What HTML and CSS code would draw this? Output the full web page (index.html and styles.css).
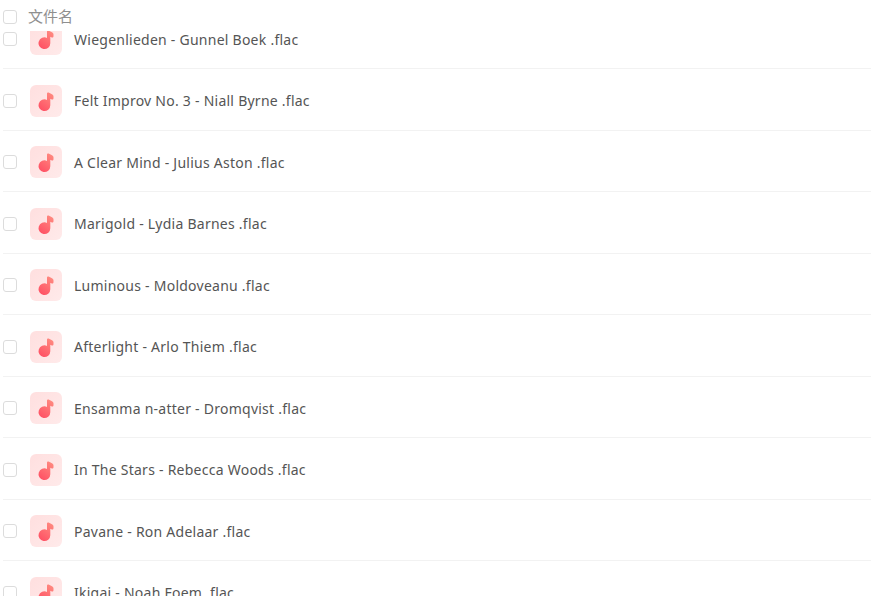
FILE: index.html
```html
<!DOCTYPE html>
<html lang="zh">
<head>
<meta charset="utf-8">
<title>文件名</title>
<link rel="stylesheet" href="styles.css">
</head>
<body>
<svg class="sprite" width="0" height="0" aria-hidden="true">
  <defs>
    <linearGradient id="tile" x1="0" y1="0" x2="1" y2="1">
      <stop offset="0" stop-color="#ffdfdf"/>
      <stop offset="1" stop-color="#ffeaea"/>
    </linearGradient>
    <linearGradient id="ink" x1="0.8" y1="0" x2="0.2" y2="1">
      <stop offset="0" stop-color="#ff8a80"/>
      <stop offset="1" stop-color="#ff5064"/>
    </linearGradient>
  </defs>
  <symbol id="note" viewBox="0 0 32 32">
    <rect width="32" height="32" rx="6" fill="url(#tile)"/>
    <path d="M17 8.7c0-.9.8-1.4 1.600-1.100l3.400 1.600c.9.400 1.500 1.300 1.500 2.300v1.800c0 .9-.9 1.500-1.700 1.100l-1.500-.7v6.500a5.900 5.900 0 1 1-3.300-5.300z" fill="url(#ink)"/>
  </symbol>
</svg>
<main class="table">
  <header class="head">
    <span class="check"></span>
    <span class="head-label">文件名</span>
  </header>
  <div class="viewport">
    <ul class="rows">
      <li class="row"><span class="check"></span><svg class="icon"><use href="#note"/></svg><span class="name">Wiegenlieden - Gunnel Boek .flac</span></li>
      <li class="row"><span class="check"></span><svg class="icon"><use href="#note"/></svg><span class="name">Felt Improv No. 3 - Niall Byrne .flac</span></li>
      <li class="row"><span class="check"></span><svg class="icon"><use href="#note"/></svg><span class="name">A Clear Mind - Julius Aston .flac</span></li>
      <li class="row"><span class="check"></span><svg class="icon"><use href="#note"/></svg><span class="name">Marigold - Lydia Barnes .flac</span></li>
      <li class="row"><span class="check"></span><svg class="icon"><use href="#note"/></svg><span class="name">Luminous - Moldoveanu .flac</span></li>
      <li class="row"><span class="check"></span><svg class="icon"><use href="#note"/></svg><span class="name">Afterlight - Arlo Thiem .flac</span></li>
      <li class="row"><span class="check"></span><svg class="icon"><use href="#note"/></svg><span class="name">Ensamma n-atter - Dromqvist .flac</span></li>
      <li class="row"><span class="check"></span><svg class="icon"><use href="#note"/></svg><span class="name">In The Stars - Rebecca Woods .flac</span></li>
      <li class="row"><span class="check"></span><svg class="icon"><use href="#note"/></svg><span class="name">Pavane - Ron Adelaar .flac</span></li>
      <li class="row"><span class="check"></span><svg class="icon"><use href="#note"/></svg><span class="name">Ikigai - Noah Foem .flac</span></li>
    </ul>
  </div>
</main>
</body>
</html>
```
FILE: styles.css
```css
* { box-sizing: border-box; }
html, body { margin: 0; height: 100%; background: #fff; overflow: hidden; }
body { font-family: "Noto Sans", "Noto Sans CJK SC", sans-serif; font-size: 14px; color: #555; }
.sprite { position: absolute; }
.table { padding-left: 3px; }
.head { display: flex; align-items: center; gap: 11px; height: 31px; padding-top: 2px; }
.head-label { color: #8f8f8f; font-size: 15px; padding-bottom: 2px; }
.check { flex: none; width: 14px; height: 14px; border: 1px solid #dcdcdc; border-radius: 3px; background: #fff; }
.viewport { height: 565px; overflow: hidden; }
.rows { list-style: none; margin: -23.2px 0 0; padding: 0; }
.row { display: flex; align-items: center; height: 61.5px; padding-top: 2px; border-bottom: 1px solid #f2f2f2; }
.icon { flex: none; width: 32px; height: 32px; margin-left: 13px; margin-right: 12px; }
.name { white-space: nowrap; letter-spacing: 0.25px; }
```
